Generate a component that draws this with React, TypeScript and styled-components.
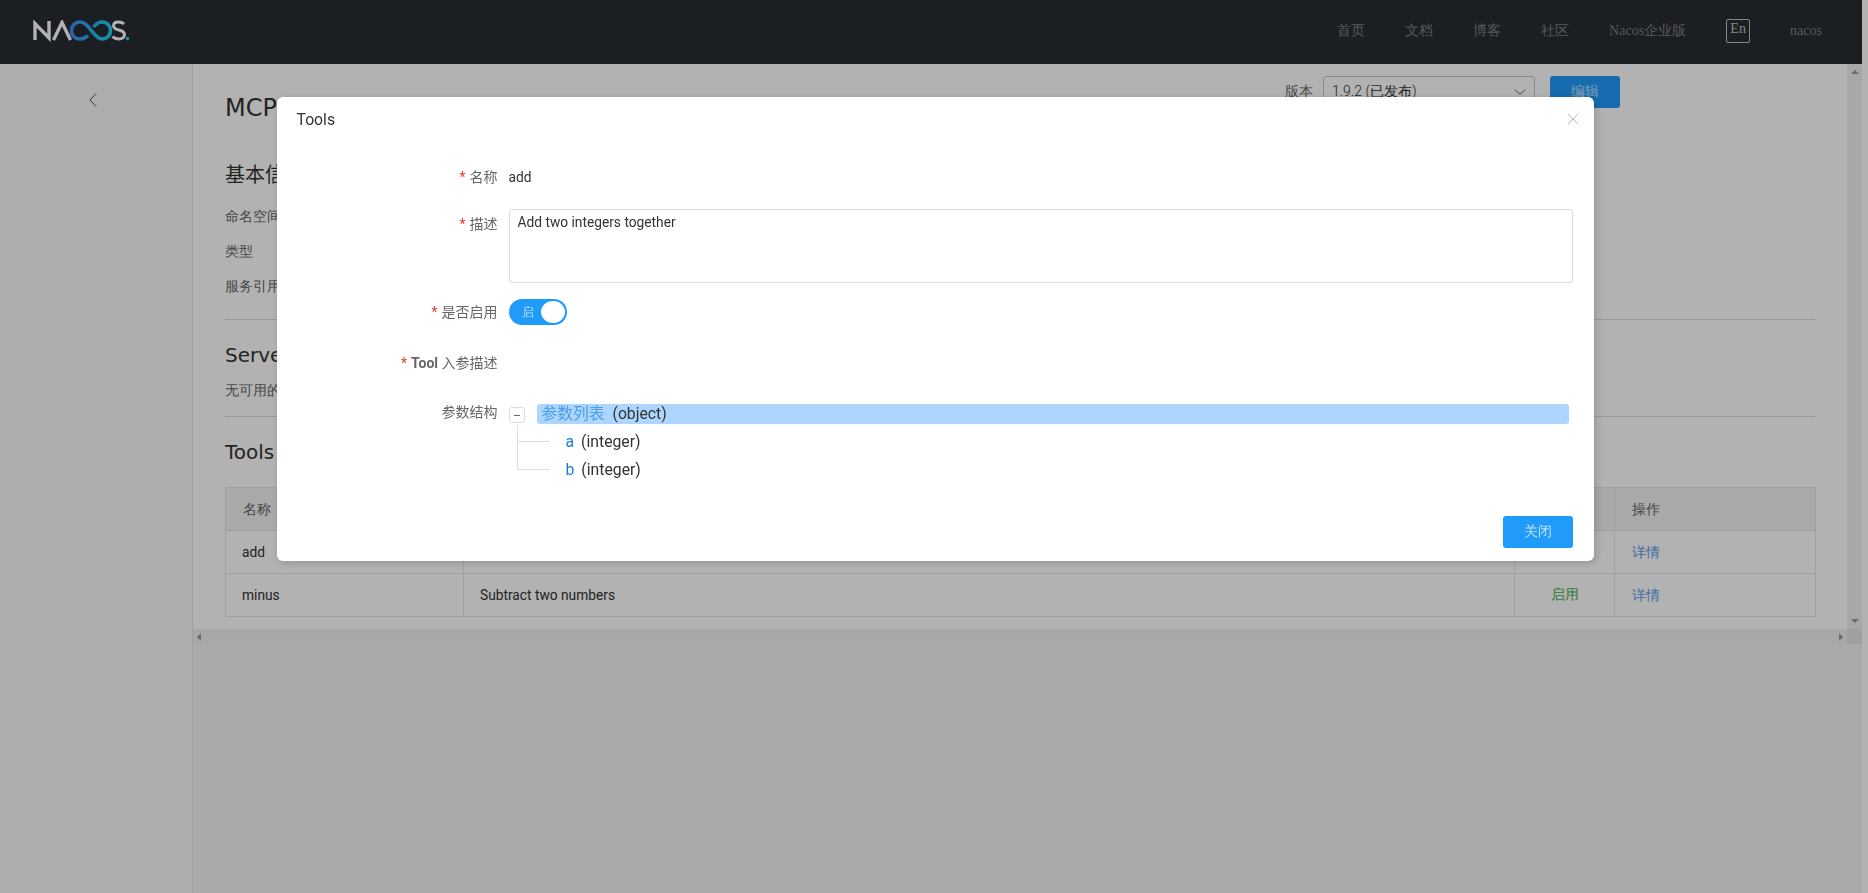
import styled, { createGlobalStyle } from "styled-components";

const SANS = `Roboto, "Noto Sans CJK SC", sans-serif`;
const THIN = `Roboto, sans-serif`;
const HEADING = `"DejaVu Sans", "Noto Sans CJK SC", sans-serif`;
const SERIF = `"Liberation Serif", serif`;
const BLUE = "#209bfa";

const GlobalStyle = createGlobalStyle`
  html, body {
    margin: 0;
    padding: 0;
    height: 100%;
    overflow: hidden;
    background: #fff;
    font-family: ${SANS};
    color: #333;
  }
  * { box-sizing: border-box; }
`;

const Page = styled.div`
  width: calc(100vw - 6px);
  height: 100vh;
  display: flex;
  flex-direction: column;
`;

const TopBar = styled.header`
  height: 64px;
  flex: none;
  background: #282b33;
  display: flex;
  align-items: center;
  justify-content: space-between;
  padding: 0 40px 2px 33px;
`;

const Nav = styled.nav`
  display: flex;
  align-items: center;
  gap: 40px;
  font: 300 14px ${SERIF};
  color: #7d7f84;
`;

const LangBox = styled.span`
  width: 24px;
  height: 24px;
  border: 1px solid #c0c0c0;
  border-radius: 2px;
  color: #c0c0c0;
  display: flex;
  justify-content: center;
  line-height: 18px;
`;

const Body = styled.div`
  flex: 1;
  display: flex;
  min-height: 0;
`;

const Sidebar = styled.aside`
  width: 193px;
  flex: none;
  background: #f8f8f8;
  border-right: 1px solid #e6e6e6;
  display: flex;
  justify-content: center;
  padding: 28px 7px 0 0;
  color: #555;
`;

const MainColumn = styled.main`
  flex: 1;
  min-width: 0;
  background: #f4f4f4;
`;

const Scroller = styled.div`
  height: 580px;
  display: grid;
  grid-template-columns: 1fr 15px;
  grid-template-rows: 1fr 15px;
  background: #fff;
`;

const Content = styled.div`
  padding: 12px 32px 0 32px;
  min-width: 0;
`;

const ScrollTrack = styled.div<{ $vertical?: boolean }>`
  background: #f1f1f1;
  display: flex;
  flex-direction: ${({ $vertical }) => ($vertical ? "column" : "row")};
  align-items: center;
  justify-content: space-between;
  padding: ${({ $vertical }) => ($vertical ? "6px 0" : "0 4px")};
`;

const ScrollCorner = styled.div`
  background: #e6e6e6;
`;

const ArrowUp = styled.span`
  border: 4px solid transparent;
  border-top: 0;
  border-bottom: 4px solid #999;
`;

const ArrowDown = styled.span`
  border: 4px solid transparent;
  border-bottom: 0;
  border-top: 4px solid #999;
`;

const ArrowLeft = styled.span`
  border: 4px solid transparent;
  border-left: 0;
  border-right: 4px solid #999;
`;

const ArrowRight = styled.span`
  border: 4px solid transparent;
  border-right: 0;
  border-left: 4px solid #999;
`;

const TitleRow = styled.div`
  height: 48px;
  display: flex;
  align-items: flex-end;
  justify-content: space-between;
`;

const Title = styled.h1`
  margin: 0;
  font: 400 24px/32px ${HEADING};
  color: #333;
`;

const Version = styled.div`
  align-self: flex-start;
  display: flex;
  align-items: center;
  font: 300 14px ${THIN};
  margin-right: 195px;
`;

const VersionLabel = styled.span`
  color: #666;
  margin-right: 10px;
`;

const VersionSelect = styled.div`
  width: 212px;
  height: 32px;
  border: 1px solid #c4c6cf;
  border-radius: 3px;
  padding: 0 8px;
  display: flex;
  align-items: center;
  justify-content: space-between;
  color: #333;
  margin-right: 15px;
`;

const EditButton = styled.button`
  width: 70px;
  height: 32px;
  border: 0;
  border-radius: 3px;
  background: ${BLUE};
  color: rgba(255, 255, 255, 0.7);
  font: 300 14px ${THIN};
`;

const SectionHeading = styled.h3<{ $top: number }>`
  margin: ${({ $top }) => $top}px 0 0;
  font: 400 20px/30px ${HEADING};
  color: #333;
`;

const InfoRow = styled.div`
  font: 300 14px/35px ${THIN};
  color: #666;
`;

const InfoGroup = styled.div<{ $top: number }>`
  margin-top: ${({ $top }) => $top}px;
`;

const Divider = styled.hr<{ $top: number }>`
  margin: ${({ $top }) => $top}px 0 0;
  border: 0;
  border-top: 1px solid #dcdcdc;
`;

const ToolTable = styled.table`
  margin-top: 20px;
  width: 100%;
  border-collapse: collapse;
  table-layout: fixed;
  font-size: 13.75px;
  color: #333;
`;

const HeadCell = styled.th<{ $w: number }>`
  width: ${({ $w }) => $w}px;
  height: 43px;
  padding: 2px 16px 0 17px;
  border: 1px solid #e6e6e6;
  background: #f2f2f2;
  font: 300 14px ${THIN};
  text-align: left;
  color: #666;
`;

const Cell = styled.td`
  height: 43px;
  padding: 0 16px;
  border: 1px solid #e6e6e6;
`;

const StatusCell = styled(Cell)`
  text-align: center;
  font: 300 14px ${THIN};
  color: #4caf50;
`;

const ActionCell = styled(Cell)`
  padding: 2px 16px 0 17px;
`;

const DetailLink = styled.a`
  font: 300 14px ${THIN};
  color: #5a9be6;
`;

const Backdrop = styled.div`
  position: fixed;
  inset: 0;
  background: rgba(0, 0, 0, 0.3);
`;

const Dialog = styled.div`
  position: fixed;
  left: 276.5px;
  top: 97px;
  width: 1317.5px;
  height: 464px;
  background: #fff;
  border-radius: 6px;
  box-shadow: 2px 2px 8px rgba(0, 0, 0, 0.18);
  display: flex;
  flex-direction: column;
`;

const DialogHeader = styled.div`
  height: 44px;
  padding: 0 15px 0 20px;
  display: flex;
  align-items: center;
  justify-content: space-between;
  font-size: 15.75px;
  color: #333;
`;

const CloseIcon = styled.svg`
  width: 12px;
  height: 12px;
  stroke: #b5b5b5;
`;

const Form = styled.div`
  padding: 22px 21px 0 0;
  flex: 1;
`;

const FormRow = styled.div<{ $top?: number }>`
  display: grid;
  grid-template-columns: 221px 1fr;
  column-gap: 11px;
  margin-top: ${({ $top }) => $top ?? 0}px;
`;

const Label = styled.label<{ $drop?: number }>`
  font-size: 14px;
  line-height: 28px;
  padding-top: ${({ $drop }) => $drop ?? 0}px;
  color: #666;
  text-align: right;
`;

const Required = styled.span`
  color: #e5402b;
  margin-right: 4px;
`;

const StrongWord = styled.b`
  font-weight: 700;
`;

const PlainValue = styled.div`
  font-size: 13.75px;
  line-height: 28px;
  color: #333;
`;

const DescBox = styled.div`
  height: 74px;
  border: 1px solid #dcdcdc;
  border-radius: 3px;
  padding: 2px 8px;
  font-size: 13.75px;
  line-height: 20px;
  color: #333;
`;

const Switch = styled.div`
  width: 58px;
  height: 26px;
  margin-top: 1px;
  border-radius: 13px;
  background: ${BLUE};
  padding: 2px;
  display: flex;
  align-items: center;
  justify-content: space-between;
  color: #fff;
  font: 300 12px ${THIN};
`;

const SwitchText = styled.span`
  margin-left: 11px;
  opacity: 0.7;
`;

const SwitchKnob = styled.span`
  width: 24px;
  height: 22px;
  border-radius: 50%;
  background: #fff;
`;

const Tree = styled.div`
  padding: 6px 4px 0 0;
`;

const TreeRoot = styled.div`
  display: flex;
  align-items: center;
  gap: 12px;
  height: 20px;
`;

const Toggle = styled.span`
  width: 16px;
  height: 16px;
  flex: none;
  margin-top: 2px;
  border: 1px solid #dcdcdc;
  border-radius: 3px;
  display: flex;
  align-items: center;
  justify-content: center;
`;

const ToggleMinus = styled.span`
  width: 6px;
  height: 1px;
  background: #666;
`;

const RootLabel = styled.div`
  flex: 1;
  height: 20px;
  background: #add6ff;
  border-radius: 3px;
  padding-left: 5px;
  font-size: 15.75px;
  line-height: 20px;
  display: flex;
  gap: 8px;
`;

const RootName = styled.span`
  color: #4a9de8;
`;

const TreeChild = styled.div<{ $first?: boolean }>`
  position: relative;
  height: 28px;
  padding-left: 57px;
  font-size: 15.75px;
  line-height: 28px;
  margin-top: ${({ $first }) => ($first ? 4 : 0)}px;
  display: flex;
  gap: 7px;

  &::before {
    content: "";
    position: absolute;
    left: 8px;
    top: ${({ $first }) => ($first ? -3 : -14)}px;
    bottom: 14px;
    width: 32px;
    border-left: 1px solid #dcdcdc;
    border-bottom: 1px solid #dcdcdc;
  }
`;

const ChildName = styled.span`
  color: #1a7fdc;
`;

const DialogFooter = styled.div`
  padding: 0 21px 13px;
  display: flex;
  justify-content: flex-end;
`;

const CloseButton = styled.button`
  width: 70px;
  height: 32px;
  border: 0;
  border-radius: 3px;
  background: ${BLUE};
  color: rgba(255, 255, 255, 0.7);
  font: 300 14px ${THIN};
`;

const Logo = () => (
  <svg width="98" height="22" viewBox="33 19 98 22" fill="none">
    <defs>
      <linearGradient id="nacosWave" x1="72" x2="112" y1="0" y2="0" gradientUnits="userSpaceOnUse">
        <stop offset="0" stopColor="#4090f0" />
        <stop offset="1" stopColor="#18d8f0" />
      </linearGradient>
    </defs>
    <path d="M35 39V22.5L49 37V20" stroke="#fff" strokeWidth="3.4" />
    <path d="M53.5 39L62 21.5L70.5 39" stroke="#fff" strokeWidth="3.4" />
    <path
      d="M88 34.5C85.5 37 82.5 38 80 38C74.8 38 71.5 34.3 71.5 29.5C71.5 24.7 75 21 80 21C86 21 88.5 26.5 91.5 29.8C94.5 33 97 38 102 38C107 38 110.5 34.3 110.5 29.5C110.5 24.7 107 21 102 21C98 21 95.5 23.5 93.5 26"
      stroke="url(#nacosWave)"
      strokeWidth="3.6"
    />
    <path
      d="M124 23C122.5 21.5 120.5 21 118.5 21C115.5 21 113.5 22.3 113.5 24.8C113.5 30.5 124.5 27.5 124.5 33.5C124.5 36.5 122 38 119 38C116.5 38 114 37 112.5 35.5"
      stroke="#fff"
      strokeWidth="3"
    />
    <circle cx="127.5" cy="37.5" r="1.7" fill="#18d8f0" />
  </svg>
);

const BackIcon = () => (
  <svg width="10" height="16" viewBox="0 0 10 16" fill="none" stroke="currentColor" strokeWidth="1">
    <path d="M8 1.5L2 8L8 14.5" />
  </svg>
);

const Chevron = () => (
  <svg width="12" height="8" viewBox="0 0 12 8" fill="none" stroke="#666" strokeWidth="1">
    <path d="M1 1.5L6 6.5L11 1.5" />
  </svg>
);

const tools = [
  { name: "add", description: "Add two integers together" },
  { name: "minus", description: "Subtract two numbers" },
];

const App = () => (
  <>
    <GlobalStyle />
    <Page>
      <TopBar>
        <Logo />
        <Nav>
          <span>首页</span>
          <span>文档</span>
          <span>博客</span>
          <span>社区</span>
          <span>Nacos企业版</span>
          <LangBox>En</LangBox>
          <span>nacos</span>
        </Nav>
      </TopBar>
      <Body>
        <Sidebar>
          <div>
            <BackIcon />
          </div>
        </Sidebar>
        <MainColumn>
          <Scroller>
            <Content>
              <TitleRow>
                <Title>MCP</Title>
                <Version>
                  <VersionLabel>版本</VersionLabel>
                  <VersionSelect>
                    1.9.2 (已发布)
                    <Chevron />
                  </VersionSelect>
                  <EditButton>编辑</EditButton>
                </Version>
              </TitleRow>
              <SectionHeading $top={36}>基本信息</SectionHeading>
              <InfoGroup $top={9}>
                <InfoRow>命名空间</InfoRow>
                <InfoRow>类型</InfoRow>
                <InfoRow>服务引用</InfoRow>
              </InfoGroup>
              <Divider $top={15} />
              <SectionHeading $top={20}>Server</SectionHeading>
              <InfoGroup $top={3}>
                <InfoRow>无可用的</InfoRow>
              </InfoGroup>
              <Divider $top={8} />
              <SectionHeading $top={20}>Tools</SectionHeading>
              <ToolTable>
                <thead>
                  <tr>
                    <HeadCell $w={238}>名称</HeadCell>
                    <HeadCell $w={1051}>描述</HeadCell>
                    <HeadCell $w={100}>状态</HeadCell>
                    <HeadCell $w={201}>操作</HeadCell>
                  </tr>
                </thead>
                <tbody>
                  {tools.map((tool) => (
                    <tr key={tool.name}>
                      <Cell>{tool.name}</Cell>
                      <Cell>{tool.description}</Cell>
                      <StatusCell>启用</StatusCell>
                      <ActionCell>
                        <DetailLink>详情</DetailLink>
                      </ActionCell>
                    </tr>
                  ))}
                </tbody>
              </ToolTable>
            </Content>
            <ScrollTrack $vertical>
              <ArrowUp />
              <ArrowDown />
            </ScrollTrack>
            <ScrollTrack>
              <ArrowLeft />
              <ArrowRight />
            </ScrollTrack>
            <ScrollCorner />
          </Scroller>
        </MainColumn>
      </Body>
    </Page>
    <Backdrop />
    <Dialog>
      <DialogHeader>
        Tools
        <CloseIcon viewBox="0 0 12 12" fill="none">
          <path d="M1 1L11 11M11 1L1 11" />
        </CloseIcon>
      </DialogHeader>
      <Form>
        <FormRow>
          <Label>
            <Required>*</Required>名称
          </Label>
          <PlainValue>add</PlainValue>
        </FormRow>
        <FormRow $top={18}>
          <Label $drop={1}>
            <Required>*</Required>描述
          </Label>
          <DescBox>Add two integers together</DescBox>
        </FormRow>
        <FormRow $top={15}>
          <Label>
            <Required>*</Required>是否启用
          </Label>
          <Switch>
            <SwitchText>启</SwitchText>
            <SwitchKnob />
          </Switch>
        </FormRow>
        <FormRow $top={23}>
          <Label>
            <Required>*</Required>
            <StrongWord>Tool</StrongWord> 入参描述
          </Label>
          <div />
        </FormRow>
        <FormRow $top={21}>
          <Label>参数结构</Label>
          <Tree>
            <TreeRoot>
              <Toggle>
                <ToggleMinus />
              </Toggle>
              <RootLabel>
                <RootName>参数列表</RootName>
                <span>(object)</span>
              </RootLabel>
            </TreeRoot>
            <TreeChild $first>
              <ChildName>a</ChildName>
              <span>(integer)</span>
            </TreeChild>
            <TreeChild>
              <ChildName>b</ChildName>
              <span>(integer)</span>
            </TreeChild>
          </Tree>
        </FormRow>
      </Form>
      <DialogFooter>
        <CloseButton>关闭</CloseButton>
      </DialogFooter>
    </Dialog>
  </>
);

export default App;
